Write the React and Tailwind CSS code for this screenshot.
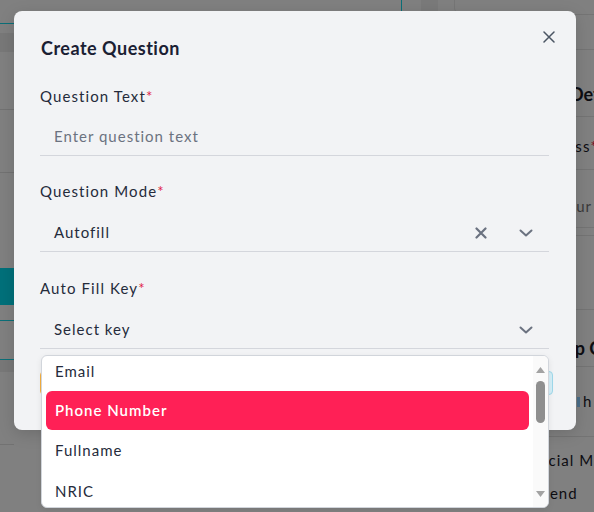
import React from "react";

const font = { fontFamily: "Lato, 'Noto Sans', sans-serif" };

function Chevron() {
  return (
    <svg width="14" height="8" viewBox="0 0 14 8" fill="none">
      <path d="M1.5 1.5 L7 6.5 L12.5 1.5" stroke="#6b7280" strokeWidth="2" strokeLinecap="round" strokeLinejoin="round" />
    </svg>
  );
}

function ClearX() {
  return (
    <svg width="12" height="12" viewBox="0 0 12 12" fill="none">
      <path d="M1.5 1.5 L10.5 10.5 M10.5 1.5 L1.5 10.5" stroke="#6b7280" strokeWidth="2.2" strokeLinecap="round" />
    </svg>
  );
}

function Label({ children }) {
  return (
    <div className="h-[22px] flex items-center text-[15px] tracking-[1.1px] text-[#252b3b]">
      {children}
      <span className="text-[#e11d48]">*</span>
    </div>
  );
}

export default function App() {
  return (
    <div className="relative w-[594px] h-[512px] overflow-hidden bg-[#808080]" style={font}>
      {/* background page (dimmed) */}
      <div className="flex h-full">
        <div className="w-[14px] flex flex-col">
          <div className="h-[23px]" />
          <div className="h-[1px] bg-[#0b6f78]" />
          <div className="h-[9px]" />
          <div className="h-[19px] bg-[#787878]" />
          <div className="h-[57px]" />
          <div className="h-[1px] bg-[#727272]" />
          <div className="h-[62px]" />
          <div className="h-[1px] bg-[#727272]" />
          <div className="h-[95px]" />
          <div className="h-[37px] bg-[#00707a]" />
          <div className="h-[15px]" />
          <div className="h-[1px] bg-[#0b6f78]" />
          <div className="h-[38px]" />
          <div className="h-[1px] bg-[#0b6f78]" />
          <div className="h-[12px] bg-[#787878]" />
          <div className="h-[72px]" />
          <div className="h-[1px] bg-[#727272]" />
        </div>
        <div className="flex-1 flex">
          <div className="w-[387px]" />
          <div className="w-[1px] h-[11px] bg-[#0b6f78]" />
          <div className="w-[19px]" />
          <div className="w-[17px] h-[11px] bg-[#7a7a7a]" />
          <div className="w-[16px]" />
          <div className="flex-1 h-[14px] rounded-bl-[6px] border-l border-b border-[#767676]" />
        </div>
        <div className="w-[64px] overflow-hidden flex flex-col text-[#0d0d12] whitespace-nowrap">
          <div className="h-[15px] border-b border-[#747474]" />
          <div className="h-[35px] border-b border-[#747474]" />
          <div className="h-[67px] border-b border-[#747474] flex items-center pl-[40px] pt-[22px] text-[18px] font-bold">
            Details
          </div>
          <div className="h-[53px] border-b border-[#747474] flex items-center pt-[6px] text-[15px] tracking-[1.1px]">
            Address<span className="text-[#7a0d22]">*</span>
          </div>
          <div className="h-[58px] border-b border-[#747474] flex items-center pl-[28px] pt-[16px] text-[15px] tracking-[1px] text-[#3a3a3a]">
            Your
          </div>
          <div className="h-[8px] border-b border-[#747474]" />
          <div className="h-[74px] border-b border-[#747474]" />
          <div className="h-[57px] border-b border-[#747474] flex items-center pl-[17px] pt-[20px] text-[18px] font-bold">
            Help C
          </div>
          <div className="h-[70px] border-b border-[#747474] flex items-center pl-[47px] text-[15px]">
            <span className="w-[3px] h-[10px] bg-[#4b6f8a] mr-[3px] shrink-0" />h
          </div>
          <div className="h-[46px] flex items-center text-[15px] tracking-[1px]">
            Social Media
          </div>
          <div className="h-[20px] flex items-center text-[15px] tracking-[1px]">
            Friend
          </div>
        </div>
      </div>

      {/* modal */}
      <div className="absolute left-[14px] top-[11px] w-[562px] h-[419px] rounded-lg bg-[#f2f3f5] shadow-[0_4px_16px_rgba(0,0,0,0.15)] pl-[26px] pr-[27px] pt-[23px]">
        <button className="absolute right-[21px] top-[20px] w-[12px] h-[12px] flex items-center justify-center">
          <svg width="12" height="12" viewBox="0 0 12 12" fill="none">
            <path d="M1 1 L11 11 M11 1 L1 11" stroke="#4b5563" strokeWidth="1.5" strokeLinecap="round" />
          </svg>
        </button>
        <div className="h-[28px] flex items-center pl-[1px] text-[18px] font-bold tracking-[0.5px] text-[#1a2033]">Create Question</div>

        <div className="mt-[23px]">
          <Label>Question Text</Label>
          <div className="mt-[11px] h-[38px] border-b border-[#d4d6dc] flex items-center pl-[14px] text-[15px] tracking-[1px] text-[#6b7280]">
            Enter question text
          </div>
        </div>

        <div className="mt-[24px]">
          <Label>Question Mode</Label>
          <div className="mt-[12px] h-[38px] border-b border-[#d4d6dc] flex items-center pl-[14px] pr-[16px] text-[15px] tracking-[1px] text-[#252b3b]">
            <span className="flex-1">Autofill</span>
            <span className="mr-[32px] flex"><ClearX /></span>
            <Chevron />
          </div>
        </div>

        <div className="mt-[25px]">
          <Label>Auto Fill Key</Label>
          <div className="mt-[12px] h-[38px] border-b border-[#d4d6dc] flex items-center pl-[14px] pr-[16px] text-[15px] tracking-[1px] text-[#252b3b]">
            <span className="flex-1">Select key</span>
            <Chevron />
          </div>
        </div>

        <div className="mt-[22px] flex justify-between">
          <div className="w-[110px] h-[24px] rounded border border-[#f5b041] bg-[#fbe3b5]" />
          <div className="w-[110px] h-[24px] rounded border border-[#9fd8ea] bg-[#d4eef7] -mr-[4px]" />
        </div>
      </div>

      {/* dropdown menu */}
      <div className="absolute left-[41px] top-[355px] w-[508px] h-[153px] rounded-md border border-[#d1d5db] bg-white shadow-[0_2px_6px_rgba(0,0,0,0.08)] overflow-hidden flex">
        <div className="flex-1 overflow-hidden">
          <div className="-mt-[5px] text-[15px] tracking-[1px] text-[#252b3b]">
            <div className="h-[40px] mx-[4px] px-[9px] flex items-center">Email</div>
            <div className="h-[39px] mx-[4px] px-[9px] flex items-center rounded-md bg-[#ff2056] text-white font-semibold">Phone Number</div>
            <div className="h-[41px] mx-[4px] px-[9px] flex items-center">Fullname</div>
            <div className="h-[40px] mx-[4px] px-[9px] flex items-center">NRIC</div>
          </div>
        </div>
        <div className="w-[15px] bg-[#fafafa] flex flex-col items-center pt-[11px]">
          <svg width="9" height="6" viewBox="0 0 9 6"><path d="M4.5 0 L9 6 L0 6 Z" fill="#a3a3a3" /></svg>
          <div className="mt-[8px] w-[9px] h-[42px] rounded-full bg-[#8f8f8f]" />
          <div className="flex-1" />
          <svg className="mb-[10px]" width="9" height="6" viewBox="0 0 9 6"><path d="M0 0 L9 0 L4.5 6 Z" fill="#a3a3a3" /></svg>
        </div>
      </div>
    </div>
  );
}
